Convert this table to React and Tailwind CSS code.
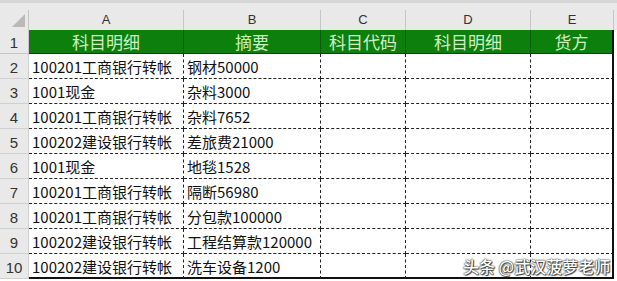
const cols = [
  { key: "A", w: "w-[155px]", title: "科目明细" },
  { key: "B", w: "w-[137px]", title: "摘要" },
  { key: "C", w: "w-[85px]", title: "科目代码" },
  { key: "D", w: "w-[125px]", title: "科目明细" },
  { key: "E", w: "w-[83px]", title: "货方" },
];

const rows = [
  ["100201工商银行转帐", "钢材50000"],
  ["1001现金", "杂料3000"],
  ["100201工商银行转帐", "杂料7652"],
  ["100202建设银行转帐", "差旅费21000"],
  ["1001现金", "地毯1528"],
  ["100201工商银行转帐", "隔断56980"],
  ["100201工商银行转帐", "分包款100000"],
  ["100202建设银行转帐", "工程结算款120000"],
  ["100202建设银行转帐", "洗车设备1200"],
];

const font = "font-['Microsoft_YaHei','Noto_Sans_CJK_SC',sans-serif]";

export default function App() {
  return (
    <div className={`relative w-[617px] h-[281px] overflow-hidden bg-white ${font}`}>
      {/* top strip */}
      <div className="h-[3px] bg-[#d6d6d6]" />
      <div className="h-[7px] bg-[#e9e9e9]" />

      {/* column letters */}
      <div className="flex h-[20px] bg-[#e9e9e9] text-[13px] text-[#333] leading-[20px]">
        <div className="relative w-[29px] shrink-0 border-r border-[#c6c6c6]">
          <svg width="13" height="13" className="absolute right-[3px] bottom-[3px]" viewBox="0 0 13 13">
            <polygon points="13,0 13,13 0,13" fill="#b9b9b9" />
          </svg>
        </div>
        {cols.map((c) => (
          <div key={c.key} className={`${c.w} shrink-0 text-center border-r border-[#c6c6c6] font-['Liberation_Sans',sans-serif]`}>
            {c.key}
          </div>
        ))}
      </div>

      {/* row 1 header */}
      <div className="flex h-[24px]">
        <div className="w-[29px] shrink-0 bg-[#e9e9e9] border-r border-b border-[#c6c6c6] text-[15px] text-[#333] text-center leading-[26px] font-['Liberation_Sans',sans-serif]">
          1
        </div>
        {cols.map((c, i) => (
          <div
            key={c.key}
            className={`${c.w} shrink-0 bg-[#0c7f0c] border-b border-b-[#1c3a1c] text-center text-[17px] text-[#cdefc2] leading-[23px] ${
              i === cols.length - 1 ? "border-r-2 border-r-[#111]" : "border-r border-r-[#0a5c0a]"
            }`}
          >
            {c.title}
          </div>
        ))}
      </div>

      {/* data rows */}
      {rows.map((r, ri) => (
        <div key={ri} className="flex h-[25px]">
          <div className="w-[29px] shrink-0 bg-[#e9e9e9] border-r border-b border-[#d0d0d0] text-[15px] text-[#333] text-center leading-[27px] font-['Liberation_Sans',sans-serif]">
            {ri + 2}
          </div>
          {cols.map((c, ci) => (
            <div
              key={c.key}
              className={`${c.w} shrink-0 pl-[3px] text-[15px] text-[#111] leading-[25px] whitespace-nowrap overflow-hidden border-solid ${
                ri === rows.length - 1 ? "border-b-2 border-b-[#111]" : "border-b [border-bottom-style:dashed] border-b-[#222]"
              } ${ci === cols.length - 1 ? "border-r-2 border-r-[#111]" : "border-r [border-right-style:dashed] border-r-[#222]"}`}
            >
              {r[ci] || ""}
            </div>
          ))}
        </div>
      ))}

      {/* watermark */}
      <div className="absolute left-[463px] top-[256px] text-[16px] font-medium text-white leading-[20px] whitespace-nowrap [text-shadow:0_0_1px_#222,0_0_2px_#333,1px_1px_1px_#444]">
        头条 @武汉菠萝老师
      </div>
    </div>
  );
}
